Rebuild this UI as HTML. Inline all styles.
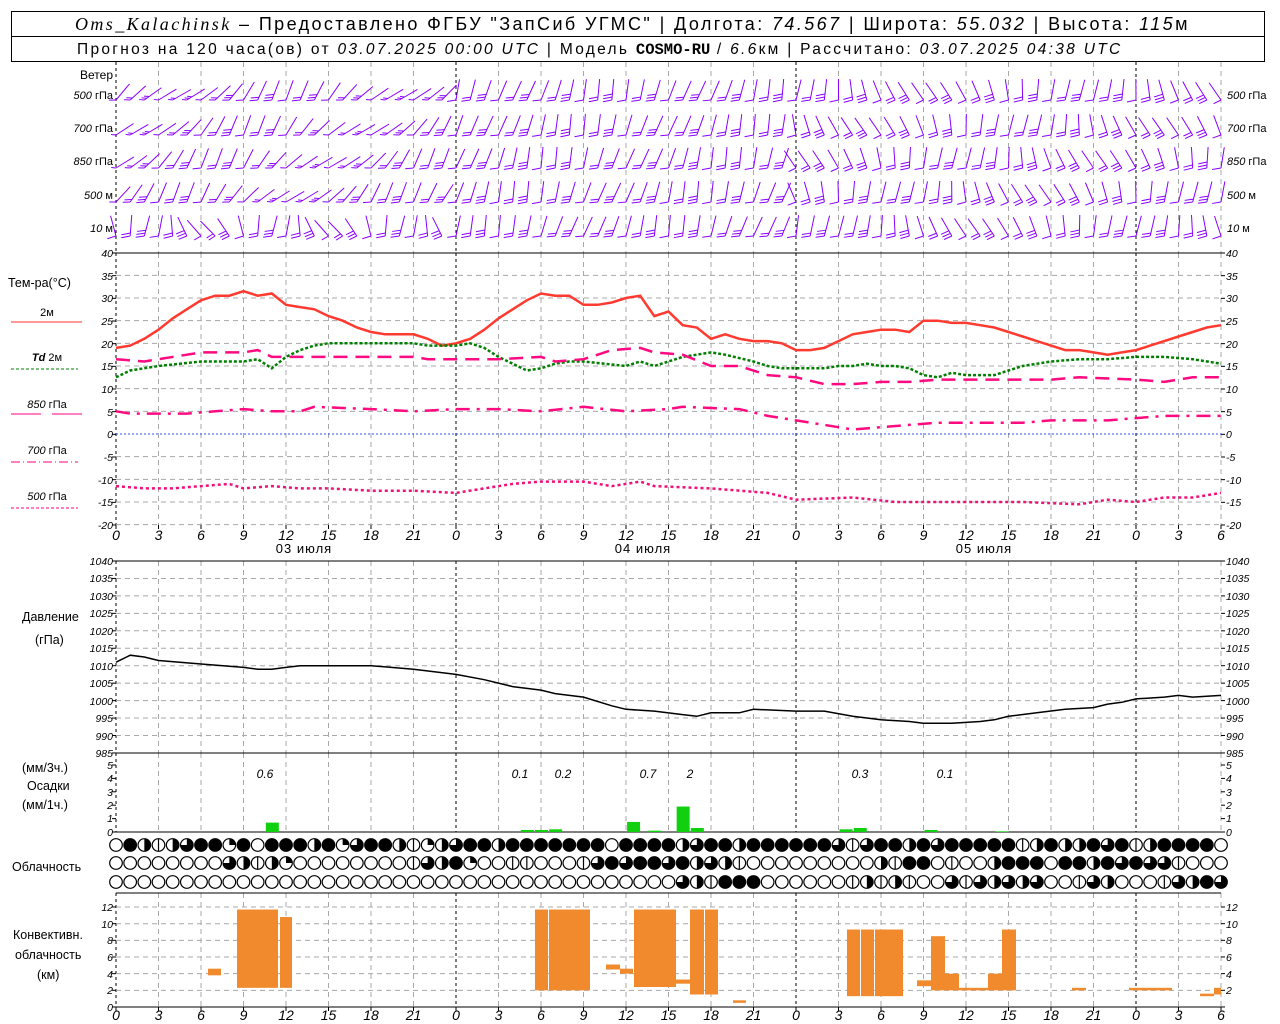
<!DOCTYPE html>
<html><head><meta charset="utf-8">
<style>
html,body{margin:0;padding:0;background:#fff;}
svg{display:block;}
text{font-family:"Liberation Sans","DejaVu Sans",sans-serif;fill:#000;}
.t{font-size:10.5px;font-style:italic;}
.l{font-size:12px;}
.s{font-size:11px;}
</style></head><body>
<svg id="c" width="1280" height="1024" viewBox="0 0 1280 1024" xmlns="http://www.w3.org/2000/svg">
<rect x="11.5" y="11.5" width="1253" height="50" fill="none" stroke="#000"/>
<line x1="11" y1="36.5" x2="1265" y2="36.5" stroke="#000"/>
<text x="75" y="30" style="font-size:18px;letter-spacing:2.4px"><tspan style="font-family:'Liberation Serif',serif;font-style:italic">Oms_Kalachinsk</tspan> – Предоставлено ФГБУ "ЗапСиб УГМС" | Долгота: <tspan font-style="italic">74.567</tspan> | Широта: <tspan font-style="italic">55.032</tspan> | Высота: <tspan font-style="italic">115</tspan>м</text>
<text x="77" y="54" style="font-size:15.5px;letter-spacing:2.3px">Прогноз на 120 часа(ов) от <tspan font-style="italic">03.07.2025 00:00 UTC</tspan>  | Модель <tspan font-weight="bold" style="font-family:'Liberation Mono',monospace;letter-spacing:0">COSMO-RU</tspan> / <tspan font-style="italic">6.6</tspan>км | Рассчитано: <tspan font-style="italic">03.07.2025 04:38 UTC</tspan></text>

<g id="grid"></g>
<g id="data"></g>

<g class="s">
<text x="113" y="79" text-anchor="end" style="font-size:12px">Ветер</text>
<text x="113" y="99" text-anchor="end"><tspan font-style="italic">500</tspan> гПа</text>
<text x="113" y="132" text-anchor="end"><tspan font-style="italic">700</tspan> гПа</text>
<text x="113" y="165" text-anchor="end"><tspan font-style="italic">850</tspan> гПа</text>
<text x="113" y="199" text-anchor="end"><tspan font-style="italic">500</tspan>  м</text>
<text x="113" y="232" text-anchor="end"><tspan font-style="italic">10</tspan>    м</text>
<text x="1227" y="99"><tspan font-style="italic">500</tspan> гПа</text>
<text x="1227" y="132"><tspan font-style="italic">700</tspan> гПа</text>
<text x="1227" y="165"><tspan font-style="italic">850</tspan> гПа</text>
<text x="1227" y="199"><tspan font-style="italic">500</tspan>  м</text>
<text x="1227" y="232"><tspan font-style="italic">10</tspan>    м</text>
</g>

<g class="l" style="font-size:12.5px">
<text x="8" y="287">Тем-ра(°C)</text>
<text x="47" y="316" text-anchor="middle" class="s">2м</text>
<text x="47" y="361" text-anchor="middle" class="s"><tspan font-style="italic" font-weight="bold">Td</tspan>  2м</text>
<text x="47" y="408" text-anchor="middle" class="s"><tspan font-style="italic">850</tspan> гПа</text>
<text x="47" y="454" text-anchor="middle" class="s"><tspan font-style="italic">700</tspan> гПа</text>
<text x="47" y="500" text-anchor="middle" class="s"><tspan font-style="italic">500</tspan> гПа</text>
<text x="22" y="621">Давление</text>
<text x="35" y="644">(гПа)</text>
<text x="22" y="772">(мм/3ч.)</text>
<text x="27" y="790">Осадки</text>
<text x="22" y="809">(мм/1ч.)</text>
<text x="12" y="871">Облачность</text>
<text x="13" y="939">Конвективн.</text>
<text x="15" y="959">облачность</text>
<text x="37" y="979">(км)</text>
</g>
<line x1="11" y1="322" x2="82" y2="322" stroke="#ff3030" stroke-width="1"/>
<line x1="11" y1="369" x2="78" y2="369" stroke="#008000" stroke-dasharray="3,2"/>
<line x1="11" y1="414" x2="41" y2="414" stroke="#ff0080"/><line x1="52" y1="414" x2="82" y2="414" stroke="#ff0080"/>
<line x1="11" y1="462" x2="78" y2="462" stroke="#ff0080" stroke-dasharray="9,3,1,3"/>
<line x1="11" y1="508" x2="78" y2="508" stroke="#ff0080" stroke-dasharray="3,2"/>

<g class="t">
<text x="113" y="257" text-anchor="end">40</text><text x="113" y="280" text-anchor="end">35</text><text x="113" y="302" text-anchor="end">30</text><text x="113" y="325" text-anchor="end">25</text><text x="113" y="348" text-anchor="end">20</text><text x="113" y="370" text-anchor="end">15</text><text x="113" y="393" text-anchor="end">10</text><text x="113" y="416" text-anchor="end">5</text><text x="113" y="438" text-anchor="end">0</text><text x="113" y="461" text-anchor="end">-5</text><text x="113" y="484" text-anchor="end">-10</text><text x="113" y="506" text-anchor="end">-15</text><text x="113" y="529" text-anchor="end">-20</text>
<text x="1226" y="257">40</text><text x="1226" y="280">35</text><text x="1226" y="302">30</text><text x="1226" y="325">25</text><text x="1226" y="348">20</text><text x="1226" y="370">15</text><text x="1226" y="393">10</text><text x="1226" y="416">5</text><text x="1226" y="438">0</text><text x="1226" y="461">-5</text><text x="1226" y="484">-10</text><text x="1226" y="506">-15</text><text x="1226" y="529">-20</text>
<text x="113" y="565" text-anchor="end">1040</text><text x="113" y="582" text-anchor="end">1035</text><text x="113" y="600" text-anchor="end">1030</text><text x="113" y="617" text-anchor="end">1025</text><text x="113" y="635" text-anchor="end">1020</text><text x="113" y="652" text-anchor="end">1015</text><text x="113" y="670" text-anchor="end">1010</text><text x="113" y="687" text-anchor="end">1005</text><text x="113" y="705" text-anchor="end">1000</text><text x="113" y="722" text-anchor="end">995</text><text x="113" y="740" text-anchor="end">990</text><text x="113" y="757" text-anchor="end">985</text>
<text x="1226" y="565">1040</text><text x="1226" y="582">1035</text><text x="1226" y="600">1030</text><text x="1226" y="617">1025</text><text x="1226" y="635">1020</text><text x="1226" y="652">1015</text><text x="1226" y="670">1010</text><text x="1226" y="687">1005</text><text x="1226" y="705">1000</text><text x="1226" y="722">995</text><text x="1226" y="740">990</text><text x="1226" y="757">985</text>
<text x="113" y="769" text-anchor="end">5</text><text x="113" y="782" text-anchor="end">4</text><text x="113" y="796" text-anchor="end">3</text><text x="113" y="809" text-anchor="end">2</text><text x="113" y="822" text-anchor="end">1</text><text x="113" y="836" text-anchor="end">0</text>
<text x="1226" y="769">5</text><text x="1226" y="782">4</text><text x="1226" y="796">3</text><text x="1226" y="809">2</text><text x="1226" y="822">1</text><text x="1226" y="836">0</text>
<text x="113" y="911" text-anchor="end">12</text><text x="113" y="928" text-anchor="end">10</text><text x="113" y="944" text-anchor="end">8</text><text x="113" y="961" text-anchor="end">6</text><text x="113" y="978" text-anchor="end">4</text><text x="113" y="994" text-anchor="end">2</text><text x="113" y="1011" text-anchor="end">0</text>
<text x="1226" y="911">12</text><text x="1226" y="928">10</text><text x="1226" y="944">8</text><text x="1226" y="961">6</text><text x="1226" y="978">4</text><text x="1226" y="994">2</text>
<text x="265" y="778" text-anchor="middle" style="font-size:12px">0.6</text>
<text x="520" y="778" text-anchor="middle" style="font-size:12px">0.1</text>
<text x="563" y="778" text-anchor="middle" style="font-size:12px">0.2</text>
<text x="648" y="778" text-anchor="middle" style="font-size:12px">0.7</text>
<text x="690" y="778" text-anchor="middle" style="font-size:12px">2</text>
<text x="860" y="778" text-anchor="middle" style="font-size:12px">0.3</text>
<text x="945" y="778" text-anchor="middle" style="font-size:12px">0.1</text>
</g>
<g style="font-size:14px;font-style:italic" text-anchor="middle">
<text x="116" y="540">0</text><text x="158.5" y="540">3</text><text x="201" y="540">6</text><text x="243.5" y="540">9</text><text x="286" y="540">12</text><text x="328.5" y="540">15</text><text x="371" y="540">18</text><text x="413.5" y="540">21</text><text x="456" y="540">0</text><text x="498.5" y="540">3</text><text x="541" y="540">6</text><text x="583.5" y="540">9</text><text x="626" y="540">12</text><text x="668.5" y="540">15</text><text x="711" y="540">18</text><text x="753.5" y="540">21</text><text x="796" y="540">0</text><text x="838.5" y="540">3</text><text x="881" y="540">6</text><text x="923.5" y="540">9</text><text x="966" y="540">12</text><text x="1008.5" y="540">15</text><text x="1051" y="540">18</text><text x="1093.5" y="540">21</text><text x="1136" y="540">0</text><text x="1178.5" y="540">3</text><text x="1221" y="540">6</text>
<text x="116" y="1020">0</text><text x="158.5" y="1020">3</text><text x="201" y="1020">6</text><text x="243.5" y="1020">9</text><text x="286" y="1020">12</text><text x="328.5" y="1020">15</text><text x="371" y="1020">18</text><text x="413.5" y="1020">21</text><text x="456" y="1020">0</text><text x="498.5" y="1020">3</text><text x="541" y="1020">6</text><text x="583.5" y="1020">9</text><text x="626" y="1020">12</text><text x="668.5" y="1020">15</text><text x="711" y="1020">18</text><text x="753.5" y="1020">21</text><text x="796" y="1020">0</text><text x="838.5" y="1020">3</text><text x="881" y="1020">6</text><text x="923.5" y="1020">9</text><text x="966" y="1020">12</text><text x="1008.5" y="1020">15</text><text x="1051" y="1020">18</text><text x="1093.5" y="1020">21</text><text x="1136" y="1020">0</text><text x="1178.5" y="1020">3</text><text x="1221" y="1020">6</text>
</g>
<g style="font-size:13px;letter-spacing:1px" text-anchor="middle">
<text x="304" y="553">03 июля</text><text x="643" y="553">04 июля</text><text x="984" y="553">05 июля</text>
</g>
</svg>
<script>
(function(){
var NS="http://www.w3.org/2000/svg";
var G=document.getElementById("grid"),D=document.getElementById("data");
function el(p,n,a){var e=document.createElementNS(NS,n);for(var k in a)e.setAttribute(k,a[k]);p.appendChild(e);return e;}
function X(h){return 116+h*1105/78;}
function ln(p,x1,y1,x2,y2,c,w,d){var a={x1:x1,y1:y1,x2:x2,y2:y2,stroke:c,"stroke-width":w||1};if(d)a["stroke-dasharray"]=d;return el(p,"line",a);}
var panels=[[62,253],[253,525],[561,753],[753,832],[893,1007]];
panels.forEach(function(p){for(var i=0;i<=26;i++){var x=X(3*i);if(i%8==0)ln(G,x,p[0],x,p[1],"#000",1,"3,3");else ln(G,x,p[0],x,p[1],"#a8a8a8",1,"5,4");}});
function TY(v){return 434-v*4.533;}
function PY(v){return 561+(1040-v)*3.49;}
function CY(v){return 1007-v*8.33;}
for(var v=35;v>=-20;v-=5)if(v!=0)ln(G,116,TY(v),1221,TY(v),"#a8a8a8",1,"5,4");
ln(G,116,TY(0),1221,TY(0),"#3050ff",1,"2,2");
for(var v=1035;v>=990;v-=5)ln(G,116,PY(v),1221,PY(v),"#a8a8a8",1,"5,4");
for(var v=2;v<=12;v+=2)ln(G,116,CY(v),1221,CY(v),"#a8a8a8",1,"5,4");
ln(G,116,253,1221,253,"#000",1);ln(G,116,561,1221,561,"#000",1);ln(G,116,753,1221,753,"#000",1);ln(G,116,832,1221,832,"#000",1);ln(G,116,893,1221,893,"#000",1);ln(G,116,1007,1221,1007,"#000",1);
function ticks(y0,y1,step){for(var y=y0;y<=y1+0.1;y+=step){ln(G,112,y,116,y,"#000",1);ln(G,1221,y,1225,y,"#000",1);}}
ticks(253,525,22.665);ticks(561,753,17.45);ticks(765,832,13.4);ticks(907,1007,16.66);
for(var i=0;i<=26;i++){ln(G,X(3*i),525,X(3*i),529,"#000",1);ln(G,X(3*i),1007,X(3*i),1011,"#000",1);}
function poly(pts,fy,c,w,d){var s=[];for(var i=0;i<pts.length;i+=2)s.push(X(pts[i]).toFixed(1)+","+fy(pts[i+1]).toFixed(1));var a={points:s.join(" "),fill:"none",stroke:c,"stroke-width":w};if(d)a["stroke-dasharray"]=d;el(D,"polyline",a);}
poly([0,19,1,19.5,2,21,3,23,4,25.5,5,27.5,6,29.5,7,30.5,8,30.5,9,31.5,10,30.5,11,31,12,28.5,13,28,14,27.5,15,26,16,25,17,23.5,18,22.5,19,22,20,22,21,22,22,21,23,19.5,24,20,25,21,26,23,27,25.5,28,27.5,29,29.5,30,31,31,30.5,32,30.5,33,28.5,34,28.5,35,29,36,30,37,30.5,38,26,39,27,40,24,41,23.5,42,21,43,22,44,21,45,20.5,46,20.5,47,20,48,18.5,49,18.5,50,19,51,20.5,52,22,53,22.5,54,23,55,23,56,22.5,57,25,58,25,59,24.5,60,24.5,61,24,62,23.5,63,22.5,64,21.5,65,20.5,66,19.5,67,18.5,68,18.5,69,18,70,17.5,71,18,72,18.5,73,19.5,74,20.5,75,21.5,76,22.5,77,23.5,78,24],TY,"#ff3a30",2.5);
poly([0,12.5,1,14,3,15,6,16,9,16,10,16.5,11,14.5,12,17,13,18.5,14,19.5,15,20,18,20,21,20,22,19.5,24,19.5,25,20,26,19,27,17,28,15.5,29,14,30,14.5,31,15.5,32,16,33,16,36,15,37,16,38,15,39,16,40,17,42,18,43,17.5,45,16,46,15,47,14.5,48,14.5,50,14.5,51,15,52,15,53,15.5,54,15,55,15,56,14.5,57,13,58,12.5,59,13.5,60,13,62,13,63,14,64,15,66,16,68,16.5,70,16.5,72,17,74,17,76,16.5,78,15.5],TY,"#008000",2.5,"3,2");
poly([0,16.5,2,16,3,16.5,5,17.5,6,18,9,18,10,18.5,11,17,12,17,15,17,18,17,21,17,22,16.5,24,16.5,27,16.5,30,17,31,16,33,16.5,35,18.5,37,19,38,18,40,17.5,42,15,44,15,46,13,48,12.5,50,11,52,11,54,11.5,56,11.5,58,12,66,12,68,12.5,72,12,74,11.5,76,12.5,78,12.5],TY,"#ff0a80",2.5,"14,8");
poly([0,5,1,4.5,3,4.5,5,4.5,7,5,9,5.5,11,5,13,5,14,6,18,5.5,21,5,24,5.5,27,5.5,30,5,33,6,36,5,39,5.5,40,6,44,5.5,46,4,48,3,50,2,52,1,54,1.5,56,2,58,2.5,62,2.5,64,2.5,66,3,68,3,70,3,72,3.5,74,4,76,4,78,4],TY,"#ff0a80",2.5,"14,7,3,7");
poly([0,-11.5,2,-12,4,-12,6,-11.5,8,-11,9,-12,11,-11.5,13,-12,15,-12,18,-12.5,21,-12.5,24,-13,26,-12,28,-11,30,-10.5,33,-10.5,35,-11.5,36,-11,37,-10.5,38,-11.5,42,-12,46,-13,48,-14.5,52,-14,55,-15,60,-15,64,-15,68,-15.5,70,-14.5,72,-15,74,-14,76,-14,78,-13],TY,"#f0107a",2.5,"3,3");
poly([0,1011,1,1013,2,1012.5,3,1011.5,6,1010.5,9,1009.5,10,1009,11,1009,12,1009.5,13,1010,15,1010,18,1010,21,1009,24,1007.5,26,1006,28,1004,30,1003,31,1002,33,1001,35,998.5,36,997.5,38,997,40,996,41,995.5,42,996.5,44,996.5,45,997.5,48,997,50,997,52,995.5,54,994.5,56,994,57,993.5,59,993.5,61,994,62,994.5,63,995.5,65,996.5,67,997.5,69,998,70,999,71,999.5,72,1000.5,74,1001,75,1001.5,76,1001,78,1001.5],PY,"#000",1.5);
[[11,0.7],[29,0.15],[30,0.15],[31,0.2],[36.5,0.75],[38,0.1],[40,1.9],[41,0.3],[51.5,0.2],[52.5,0.3],[57.5,0.15],[62.5,0.05]].forEach(function(b){var x=X(b[0])-6;el(D,"rect",{x:x,y:832-b[1]*13.4,width:13,height:b[1]*13.4,fill:"#10d010"});});
[[208,221,3.8,4.6],[237,278,2.3,11.7],[280,292,2.3,10.8],[535,548,2,11.7],[549,590,2,11.7],[606,620,4.5,5.1],[620,633,4,4.6],[634,676,2.4,11.7],[676,690,2.8,3.3],[690,704,1.5,11.7],[705,718,1.5,11.7],[733,746,0.5,0.8],[847,860,1.3,9.3],[861,874,1.3,9.3],[875,903,1.3,9.3],[917,931,2.5,3.2],[931,945,2,8.5],[945,959,2,4],[959,988,2,2.3],[988,1002,2,4],[1002,1016,2,9.3],[1072,1086,2,2.3],[1129,1172,2,2.3],[1200,1214,1.3,1.6],[1214,1221,1.5,2.3]].forEach(function(b){el(D,"rect",{x:b[0],y:CY(b[3]),width:b[1]-b[0],height:CY(b[2])-CY(b[3]),fill:"#f08a2c"});});
var rows=[
"OFHVHTFFQFOFFFHFQTFFHVQHTFFHFFFFFFFOFFFFHTFFHFFFFFFTVTFFHFTFFFFFVHFHHFTFVHFFFF",
"OOOOOOOOTHVHQOOOOOOOOVTHFQOOVVOOOVTFTFFTFHTHVOOOOOOOOOHVFFOVOOHFFFOFFHFTFTTVOOO",
"OOOOOOOOOOOOOOOOOOOOOOOOOOOOOOOOOOOOOOOOTHVFFFOOOOOOVHVHVOOTVTHTHTOOVTHOOOVTHFTTOF"];
var ry=[845,863,882];
rows.forEach(function(r,ri){for(var h=0;h<=78;h++){var c=r[h]||"O",x=X(h),y=ry[ri],R=6.3;
 el(D,"circle",{cx:x,cy:y,r:R,fill:c=="F"?"#000":"#fff",stroke:"#000","stroke-width":1.2});
 if(c=="H")el(D,"path",{d:"M"+x+","+(y-R)+" A"+R+","+R+" 0 0 1 "+x+","+(y+R)+"Z",fill:"#000"});
 if(c=="T")el(D,"path",{d:"M"+x+","+y+" L"+x+","+(y-R)+" A"+R+","+R+" 0 1 1 "+(x-R)+","+y+"Z",fill:"#000"});
 if(c=="Q")el(D,"path",{d:"M"+x+","+y+" L"+x+","+(y-R)+" A"+R+","+R+" 0 0 1 "+(x+R)+","+y+"Z",fill:"#000"});
 if(c=="V")ln(D,x,y-R,x,y+R,"#000",1.2);
}});
var wy=[92,127,160,194,228];
for(var r=0;r<5;r++)for(var h=0;h<=78;h++){
 var x=X(h),y=wy[r];
 var ang;
 if(h<24) ang=40+20*Math.sin(h*0.4+r);
 else if(h<48) ang=15+10*Math.sin(h*0.5+r);
 else ang=-10+25*Math.sin(h*0.3+r*1.3);
 if(r==4&&h<24) ang=-15+30*Math.sin(h*0.7);
 var a=ang*Math.PI/180,L=21;
 var bx=x,by=y+8,tx=bx+Math.sin(a)*L,ty=by-Math.cos(a)*L;
 var g=el(D,"g",{});
 ln(g,bx,by,tx,ty,"#8a00ff",1);
 var n=1+((h*7+r*3)%3);
 for(var k=0;k<n;k++){var px=bx+Math.sin(a)*(k*3),py=by-Math.cos(a)*(k*3);
  ln(g,px,py,px-Math.cos(a)*9,py-Math.sin(a)*3+2,"#8a00ff",1);}
}
})();
</script>
</body></html>
